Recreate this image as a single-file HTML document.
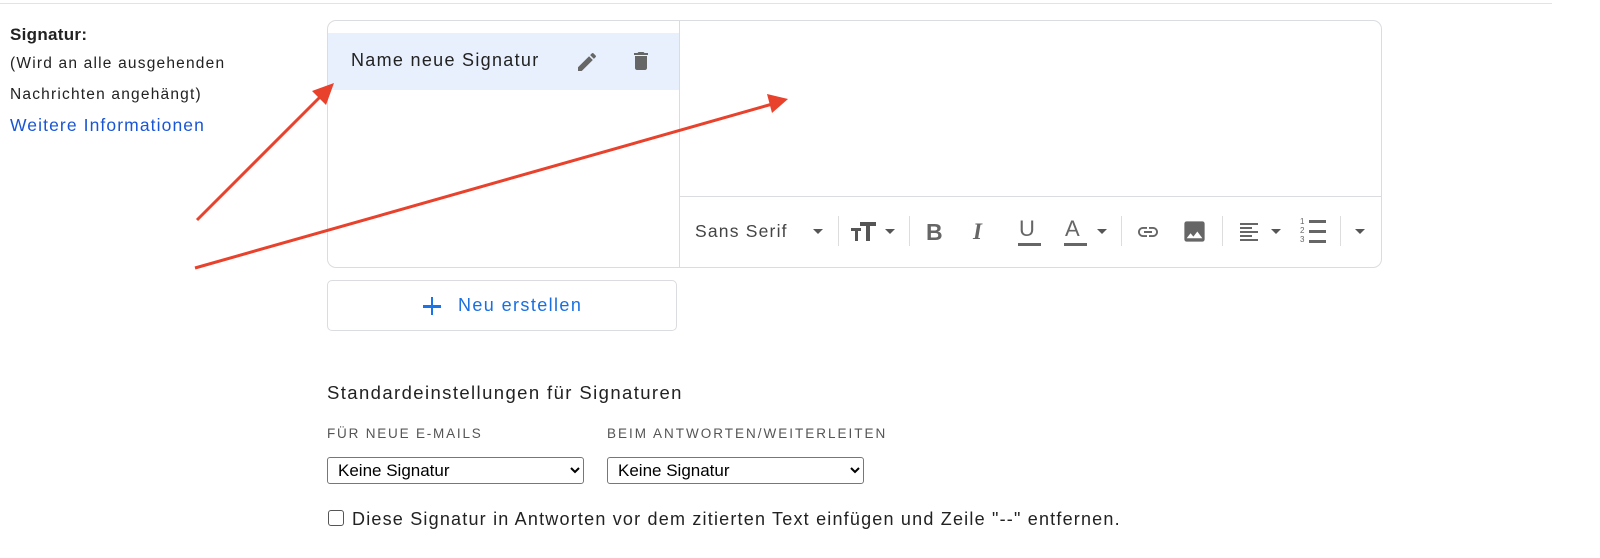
<!DOCTYPE html>
<html><head><meta charset="utf-8"><style>
*{box-sizing:border-box;margin:0;padding:0}
body{width:1600px;height:558px;background:#fff;font-family:"Liberation Sans",sans-serif;color:#222;position:relative;overflow:hidden}
.a{position:absolute;white-space:nowrap}
.tb{position:absolute;top:218px;height:28px;color:#666}
.sep{position:absolute;top:216px;width:1px;height:30px;background:#ddd}
select{position:absolute;top:457px;height:27px;font:17px "Liberation Sans",sans-serif;color:#000;border:1px solid #777;border-radius:3px;background:#fff;padding-left:6px}
</style></head><body>
<div class="a" style="left:0;top:3px;width:1552px;height:1px;background:#e3e3e3"></div>
<div class="a" style="left:10px;top:25px;font-size:17px;font-weight:bold;color:#222;letter-spacing:0.3px">Signatur:</div>
<div class="a" style="left:10px;top:55px;font-size:15.5px;color:#222;letter-spacing:1.2px">(Wird an alle ausgehenden</div>
<div class="a" style="left:10px;top:86px;font-size:15.5px;color:#222;letter-spacing:1.2px">Nachrichten angehängt)</div>
<div class="a" style="left:10px;top:115px;font-size:17.5px;color:#1a55d6;letter-spacing:1.1px">Weitere Informationen</div>

<div class="a" style="left:327px;top:20px;width:1055px;height:248px;border:1px solid #dadce0;border-radius:9px"></div>
<div class="a" style="left:679px;top:21px;width:1px;height:246px;background:#dadce0"></div>
<div class="a" style="left:680px;top:196px;width:701px;height:1px;background:#dadce0"></div>
<div class="a" style="left:328px;top:33px;width:351px;height:57px;background:#e8effd"></div>
<div class="a" style="left:351px;top:50px;font-size:18px;color:#222;letter-spacing:1.3px">Name neue Signatur</div>
<svg class="a" style="left:575px;top:50px" width="24" height="24" viewBox="0 0 24 24"><path fill="#666" d="M3 17.25V21h3.75L17.81 9.94l-3.75-3.75L3 17.25zM20.71 7.04a1 1 0 000-1.41l-2.34-2.34a1 1 0 00-1.41 0l-1.830 1.83 3.75 3.75 1.83-1.83z"/></svg>
<svg class="a" style="left:629px;top:49px" width="24" height="24" viewBox="0 0 24 24"><path fill="#666" d="M6 19c0 1.1.9 2 2 2h8c1.1 0 2-.9 2-2V7H6v12zM19 4h-3.5l-1-1h-5l-1 1H5v2h14V4z"/></svg>

<div class="tb" style="left:695px;font-size:17.5px;color:#444;top:221px;letter-spacing:1.2px">Sans Serif</div>
<svg class="a" style="left:812px;top:228px" width="12" height="8"><path d="M1 1h10L6 6z" fill="#555"/></svg>
<div class="sep" style="left:838px"></div>
<div class="a" style="left:851px;top:228px;width:10px;height:3px;background:#555"></div>
<div class="a" style="left:854.5px;top:228px;width:3px;height:13px;background:#555"></div>
<div class="a" style="left:860px;top:222px;width:16px;height:4px;background:#555"></div>
<div class="a" style="left:866px;top:222px;width:4px;height:19px;background:#555"></div>
<svg class="a" style="left:884px;top:228px" width="12" height="8"><path d="M1 1h10L6 6z" fill="#555"/></svg>
<div class="sep" style="left:909px"></div>
<div class="a" style="left:926px;top:219px;font-weight:bold;font-size:23px;color:#666">B</div>
<div class="a" style="left:973px;top:219px;font-weight:bold;font-style:italic;font-size:23px;color:#666;font-family:'Liberation Serif',serif">I</div>
<div class="a" style="left:1019px;top:216px;font-size:22px;color:#666">U</div>
<div class="a" style="left:1018px;top:243px;width:23px;height:3px;background:#666"></div>
<div class="a" style="left:1065px;top:216px;font-size:22px;color:#666">A</div>
<div class="a" style="left:1064px;top:243px;width:23px;height:3px;background:#666"></div>
<svg class="a" style="left:1096px;top:228px" width="12" height="8"><path d="M1 1h10L6 6z" fill="#555"/></svg>
<div class="sep" style="left:1121px"></div>
<svg class="a" style="left:1135px;top:220px" width="26" height="24" viewBox="0 0 24 24"><path fill="#666" d="M3.9 12c0-1.71 1.39-3.1 3.1-3.1h4V7H7c-2.76 0-5 2.240-5 5s2.24 5 5 5h4v-1.9H7c-1.71 0-3.1-1.39-3.1-3.1zM8 13h8v-2H8v2zm9-6h-4v1.9h4c1.71 0 3.1 1.39 3.1 3.1s-1.39 3.1-3.1 3.1h-4V17h4c2.76 0 5-2.24 5-5s-2.24-5-5-5z"/></svg>
<svg class="a" style="left:1181px;top:218px" width="27" height="27" viewBox="0 0 24 24"><path fill="#666" d="M21 19V5c0-1.1-.9-2-2-2H5c-1.1 0-2 .9-2 2v14c0 1.1.9 2 2 2h14c1.1 0 2-.9 2-2zM8.5 13.5l2.5 3 3.5-4.5 4.5 6H5l3.5-4.5z"/></svg>
<div class="sep" style="left:1222px"></div>
<svg class="a" style="left:1236px;top:220px" width="26" height="24" viewBox="0 0 24 24"><path fill="#666" d="M3 3h18v2H3zM3 7h12v2H3zM3 11h18v2H3zM3 15h12v2H3zM3 19h18v2H3z"/></svg>
<svg class="a" style="left:1270px;top:228px" width="12" height="8"><path d="M1 1h10L6 6z" fill="#555"/></svg>
<div class="a" style="left:1300px;top:217px;font-size:8px;line-height:9px;color:#666">1<br>2<br>3</div>
<div class="a" style="left:1309px;top:220px;width:17px;height:3px;background:#666"></div>
<div class="a" style="left:1309px;top:230px;width:17px;height:3px;background:#666"></div>
<div class="a" style="left:1309px;top:240px;width:17px;height:3px;background:#666"></div>
<div class="sep" style="left:1340px"></div>
<svg class="a" style="left:1354px;top:228px" width="12" height="8"><path d="M1 1h10L6 6z" fill="#555"/></svg>

<div class="a" style="left:327px;top:280px;width:350px;height:51px;border:1px solid #dadce0;border-radius:5px"></div>
<div class="a" style="left:423px;top:305px;width:18px;height:2.5px;background:#1a73e8"></div>
<div class="a" style="left:430.8px;top:297px;width:2.5px;height:18px;background:#1a73e8"></div>
<div class="a" style="left:458px;top:295px;font-size:18px;color:#1a6fe0;letter-spacing:1.4px">Neu erstellen</div>

<div class="a" style="left:327px;top:382px;font-size:18.5px;color:#222;letter-spacing:1.4px">Standardeinstellungen für Signaturen</div>
<div class="a" style="left:327px;top:426px;font-size:13.5px;color:#555;letter-spacing:1.8px">FÜR NEUE E-MAILS</div>
<div class="a" style="left:607px;top:426px;font-size:13.5px;color:#555;letter-spacing:2px">BEIM ANTWORTEN/WEITERLEITEN</div>
<select style="left:327px;width:257px"><option>Keine Signatur</option></select>
<select style="left:607px;width:257px"><option>Keine Signatur</option></select>
<div class="a" style="left:328px;top:510px;width:16px;height:16px;border:1px solid #555;border-radius:3px"></div>
<div class="a" style="left:352px;top:509px;font-size:18px;color:#222;letter-spacing:1.2px">Diese Signatur in Antworten vor dem zitierten Text einfügen und Zeile "--" entfernen.</div>

<svg class="a" style="left:0;top:0" width="1600" height="558">
<g stroke="#e8412c" stroke-width="3" fill="#e8412c">
<line x1="197" y1="220" x2="325" y2="92"/>
<path d="M334 83L312 91L326 105Z" stroke="none"/>
<line x1="195" y1="268" x2="776" y2="103"/>
<path d="M788 99L767 94L772 113Z" stroke="none"/>
</g></svg>
</body></html>
